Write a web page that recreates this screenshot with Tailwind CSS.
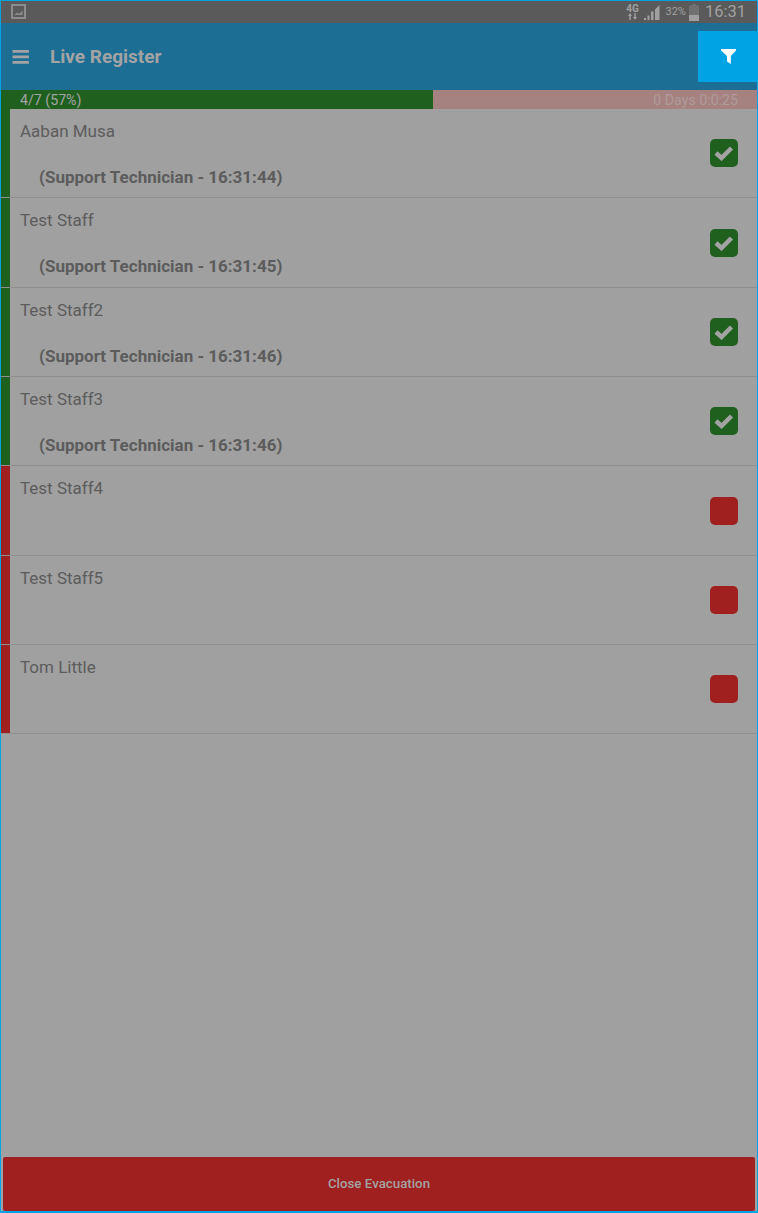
<!DOCTYPE html>
<html lang="en">

<head>
  <meta charset="UTF-8">
  <meta name="viewport" content="width=device-width, initial-scale=1.0">
  <script src="https://cdn.jsdelivr.net/npm/@tailwindcss/browser@4"></script>
  <title>Live Register</title>
</head>

<body class="font-['Roboto',sans-serif]">
  <div class="flex flex-col w-[758px] h-[1213px] overflow-hidden border border-[#00a4e4] border-b-2 bg-[#a0a0a0] text-[#5c5c5c]">

    <!-- status bar -->
    <div class="flex items-center h-[22px] shrink-0 bg-[#5a5a5a] pl-[10px] pr-[11px] text-[#a0a0a0]">
      <svg width="16" height="16" viewBox="0 0 16 16" fill="none">
        <rect x="1" y="1" width="13" height="13" stroke="#8c8c8c" stroke-width="2" />
        <path d="M3.500 11 L6 8.500 L8 10 L11.500 6.500 V11 Z" fill="#8c8c8c" />
      </svg>
      <div class="ml-auto flex items-center">
        <div class="flex flex-col items-center w-[12px] mr-[6px] text-[10px] leading-[9px] font-bold">
          <span>4G</span>
          <svg width="11" height="7" viewBox="0 0 11 7" fill="#a0a0a0">
            <path d="M1 3 L3 0 L5 3 H3.700 V7 H2.300 V3 Z M6 4 H7.300 V0 H8.700 V4 H10 L8 7 Z" />
          </svg>
        </div>
        <svg width="16" height="16" viewBox="0 0 16 16" fill="#a0a0a0" class="mr-[5px]">
          <path d="M0 16 H2 V14 H0 Z M3.500 16 H5.500 V11.500 H3.500 Z M7 16 H9.500 V7.500 H7 Z M11 16 H15.500 V1 L11 5.500 Z" />
        </svg>
        <span class="text-[11px] mr-[3px]">32%</span>
        <svg width="10" height="17" viewBox="0 0 10 17" class="mr-[6px]">
          <path d="M3 0 H7 V1.500 H10 V17 H0 V1.500 H3 Z" fill="#707070" />
          <rect x="0" y="11" width="10" height="6" fill="#a0a0a0" />
        </svg>
        <span class="text-[16.500px]">16:31</span>
      </div>
    </div>

    <!-- header -->
    <div class="flex items-center h-[67px] shrink-0 bg-[#1c6e94] pl-[11px] text-[#a3a3a3]">
      <svg width="18" height="14" viewBox="0 0 18 14" fill="#a3a3a3">
        <rect x="0.500" y="0" width="16.500" height="2.800" rx="0.600" />
        <rect x="0.500" y="5.500" width="16.500" height="2.800" rx="0.600" />
        <rect x="0.500" y="11" width="16.500" height="2.800" rx="0.600" />
      </svg>
      <h1 class="ml-[20px] mt-[2px] text-[19px] font-bold">Live Register</h1>
      <div class="ml-auto flex items-center justify-center w-[59px] h-[51px] pl-[1px] bg-[#00a4e4]">
        <svg width="15" height="15" viewBox="0 0 15 15" fill="#ffffff">
          <path d="M0 0 H15 V1.500 L9.800 7 V15 L6 12.500 V7 L0 1.500 Z" />
        </svg>
      </div>
    </div>

    <!-- progress -->
    <div class="flex h-[19px] shrink-0 text-[14.200px] leading-[21px]">
      <div class="w-[432px] bg-[#20601f] pl-[19px] text-[#a3a3a3]">4/7 (57%)</div>
      <div class="flex-1 bg-[#a58280] pr-[19px] text-right text-[#b09a9a]">0 Days 0:0:25</div>
    </div>

    <!-- register rows -->
    <div class="flex flex-col">
      <div class="flex h-[89.350px] border-b border-[#8e8e8e]">
        <div class="w-[9px] bg-[#20601f]"></div>
        <div class="flex flex-1 items-center pl-[10px] pr-[19px]">
          <div class="flex-1 self-start">
            <div class="mt-[11px] text-[17px] leading-[22px]">Aaban Musa</div>
            <div class="mt-[24px] ml-[19px] text-[17px] leading-[22px] font-bold">(Support Technician - 16:31:44)</div>
          </div>
          <div class="flex items-center justify-center w-[28px] h-[28px] rounded-[5px] bg-[#20601f]">
            <svg width="20" height="16" viewBox="0 0 20 16" fill="none">
              <path d="M2 8 L7.500 13 L17.500 3" stroke="#a3a3a3" stroke-width="4.500" />
            </svg>
          </div>
        </div>
      </div>
      <div class="flex h-[89.350px] border-b border-[#8e8e8e]">
        <div class="w-[9px] bg-[#20601f]"></div>
        <div class="flex flex-1 items-center pl-[10px] pr-[19px]">
          <div class="flex-1 self-start">
            <div class="mt-[11px] text-[17px] leading-[22px]">Test Staff</div>
            <div class="mt-[24px] ml-[19px] text-[17px] leading-[22px] font-bold">(Support Technician - 16:31:45)</div>
          </div>
          <div class="flex items-center justify-center w-[28px] h-[28px] rounded-[5px] bg-[#20601f]">
            <svg width="20" height="16" viewBox="0 0 20 16" fill="none">
              <path d="M2 8 L7.500 13 L17.500 3" stroke="#a3a3a3" stroke-width="4.500" />
            </svg>
          </div>
        </div>
      </div>
      <div class="flex h-[89.350px] border-b border-[#8e8e8e]">
        <div class="w-[9px] bg-[#20601f]"></div>
        <div class="flex flex-1 items-center pl-[10px] pr-[19px]">
          <div class="flex-1 self-start">
            <div class="mt-[11px] text-[17px] leading-[22px]">Test Staff2</div>
            <div class="mt-[24px] ml-[19px] text-[17px] leading-[22px] font-bold">(Support Technician - 16:31:46)</div>
          </div>
          <div class="flex items-center justify-center w-[28px] h-[28px] rounded-[5px] bg-[#20601f]">
            <svg width="20" height="16" viewBox="0 0 20 16" fill="none">
              <path d="M2 8 L7.500 13 L17.500 3" stroke="#a3a3a3" stroke-width="4.500" />
            </svg>
          </div>
        </div>
      </div>
      <div class="flex h-[89.350px] border-b border-[#8e8e8e]">
        <div class="w-[9px] bg-[#20601f]"></div>
        <div class="flex flex-1 items-center pl-[10px] pr-[19px]">
          <div class="flex-1 self-start">
            <div class="mt-[11px] text-[17px] leading-[22px]">Test Staff3</div>
            <div class="mt-[24px] ml-[19px] text-[17px] leading-[22px] font-bold">(Support Technician - 16:31:46)</div>
          </div>
          <div class="flex items-center justify-center w-[28px] h-[28px] rounded-[5px] bg-[#20601f]">
            <svg width="20" height="16" viewBox="0 0 20 16" fill="none">
              <path d="M2 8 L7.500 13 L17.500 3" stroke="#a3a3a3" stroke-width="4.500" />
            </svg>
          </div>
        </div>
      </div>
      <div class="flex h-[89.350px] border-b border-[#8e8e8e]">
        <div class="w-[9px] bg-[#a01f1f]"></div>
        <div class="flex flex-1 items-center pl-[10px] pr-[19px]">
          <div class="flex-1 self-start">
            <div class="mt-[11px] text-[17px] leading-[22px]">Test Staff4</div>
          </div>
          <div class="w-[28px] h-[28px] rounded-[5px] bg-[#a01f1f]"></div>
        </div>
      </div>
      <div class="flex h-[89.350px] border-b border-[#8e8e8e]">
        <div class="w-[9px] bg-[#a01f1f]"></div>
        <div class="flex flex-1 items-center pl-[10px] pr-[19px]">
          <div class="flex-1 self-start">
            <div class="mt-[11px] text-[17px] leading-[22px]">Test Staff5</div>
          </div>
          <div class="w-[28px] h-[28px] rounded-[5px] bg-[#a01f1f]"></div>
        </div>
      </div>
      <div class="flex h-[89.350px] border-b border-[#8e8e8e]">
        <div class="w-[9px] bg-[#a01f1f]"></div>
        <div class="flex flex-1 items-center pl-[10px] pr-[19px]">
          <div class="flex-1 self-start">
            <div class="mt-[11px] text-[17px] leading-[22px]">Tom Little</div>
          </div>
          <div class="w-[28px] h-[28px] rounded-[5px] bg-[#a01f1f]"></div>
        </div>
      </div>
    </div>

    <!-- footer button -->
    <div class="mt-auto px-[2px]">
      <button class="flex items-center justify-center w-full h-[54px] rounded-[2px] bg-[#a01f1f] text-[13.300px] font-medium text-[#a3a3a3]">Close Evacuation</button>
    </div>
  </div>
</body>

</html>
